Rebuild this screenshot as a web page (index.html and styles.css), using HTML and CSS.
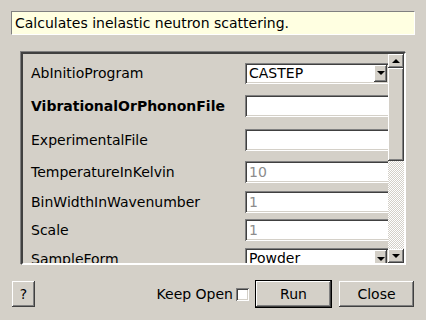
FILE: index.html
```html
<!DOCTYPE html>
<html lang="en">
<head>
    <meta charset="UTF-8">
    <meta name="viewport" content="width=device-width, initial-scale=1.0">
    <title>Abins</title>
    <link rel="stylesheet" href="styles.css">
</head>
<body>
    <div class="dialog">
        <div class="desc">Calculates inelastic neutron scattering.</div>

        <div class="panel">
            <div class="rows">
                <div class="row h32">
                    <span class="label">AbInitioProgram</span>
                    <div class="combo"><span class="value">CASTEP</span><span class="drop"><i class="tri-down"></i></span></div>
                </div>
                <div class="row h34">
                    <span class="label bold">VibrationalOrPhononFile</span>
                    <div class="field"></div>
                </div>
                <div class="row h34">
                    <span class="label">ExperimentalFile</span>
                    <div class="field"></div>
                </div>
                <div class="row h30">
                    <span class="label">TemperatureInKelvin</span>
                    <div class="field hint">10</div>
                </div>
                <div class="row">
                    <span class="label">BinWidthInWavenumber</span>
                    <div class="field hint">1</div>
                </div>
                <div class="row h28">
                    <span class="label">Scale</span>
                    <div class="field hint">1</div>
                </div>
                <div class="row">
                    <span class="label">SampleForm</span>
                    <div class="combo"><span class="value">Powder</span><span class="drop"><i class="tri-down"></i></span></div>
                </div>
            </div>
            <div class="scrollbar">
                <div class="sb-btn"><i class="tri-up"></i></div>
                <div class="thumb"></div>
                <div class="track"></div>
                <div class="sb-btn"><i class="tri-down"></i></div>
            </div>
        </div>

        <div class="actions">
            <button class="btn help">?</button>
            <span class="spacer"></span>
            <label class="keep">Keep Open <span class="check"></span></label>
            <button class="btn default">Run</button>
            <button class="btn close">Close</button>
        </div>
    </div>
</body>
</html>
```

FILE: styles.css
```css
body {
    margin: 0;
    padding: 0;
    background-color: #d4d0c8;
    font-family: "DejaVu Sans", sans-serif;
    font-size: 14px;
    color: #000;
}
.dialog {
    width: 426px;
    height: 320px;
    overflow: hidden;
}
.desc {
    margin: 11px 11px 0 11px;
    height: 22px;
    line-height: 22px;
    padding-left: 3px;
    background-color: #ffffe1;
    border: 1px solid #fff;
    border-top-color: #808080;
    border-left-color: #808080;
    white-space: nowrap;
}
.panel {
    display: flex;
    margin: 17px 0 0 21px;
    width: 381px;
    height: 209px;
    border: 2px solid;
    border-color: #404040 #fff #fff #404040;
    box-shadow: -1px -1px 0 #808080;
}
.rows {
    flex: 1;
    overflow: hidden;
    padding-top: 3px;
}
.row {
    display: flex;
    align-items: center;
    height: 29px;
    white-space: nowrap;
}
.h28 { height: 28px; }
.h30 { height: 30px; }
.h32 { height: 32px; }
.h34 { height: 34px; }
.label {
    width: 214px;
    flex-shrink: 0;
    padding-left: 8px;
}
.bold {
    font-weight: bold;
}
.field, .combo {
    flex-shrink: 0;
    height: 18px;
    line-height: 18px;
    padding: 2px 4px;
    background-color: #fff;
    box-shadow: inset 1px 1px #808080, inset -1px -1px #fff, inset 2px 2px #404040, inset -2px -2px #d4d0c8;
}
.field {
    width: 200px;
}
.hint {
    color: #8c8c8c;
}
.combo {
    display: flex;
    width: 138px;
    height: 17px;
    line-height: 17px;
    padding-right: 2px;
}
.combo .value {
    flex: 1;
}
.drop {
    display: flex;
    align-items: center;
    justify-content: center;
    width: 13px;
    height: 17px;
    background-color: #d4d0c8;
    box-shadow: inset -1px -1px #404040, inset 1px 1px #fff, inset -2px -2px #808080;
}
.tri-down, .tri-up {
    display: block;
    width: 0;
    height: 0;
    border-left: 4px solid transparent;
    border-right: 4px solid transparent;
}
.tri-down {
    border-top: 4px solid #000;
}
.tri-up {
    border-bottom: 4px solid #000;
}
.scrollbar {
    display: flex;
    flex-direction: column;
    width: 16px;
}
.sb-btn, .thumb, .btn {
    background-color: #d4d0c8;
    box-shadow: inset -1px -1px #404040, inset 1px 1px #fff, inset -2px -2px #808080;
}
.sb-btn {
    display: flex;
    align-items: center;
    justify-content: center;
    height: 14px;
}
.thumb {
    height: 93px;
}
.track {
    flex: 1;
    background: repeating-conic-gradient(#fff 0 25%, #d4d0c8 0 50%) 0 0 / 2px 2px;
}
.actions {
    display: flex;
    align-items: center;
    margin-top: 15px;
    padding: 0 12px;
    height: 28px;
}
.spacer {
    flex: 1;
}
.btn {
    height: 26px;
    padding: 0;
    border: none;
    font-family: inherit;
    font-size: 14px;
    color: #000;
}
.help {
    width: 23px;
}
.keep {
    display: flex;
    align-items: center;
    gap: 3px;
    margin-right: 6px;
}
.check {
    width: 13px;
    height: 13px;
    background-color: #fff;
    box-sizing: border-box;
    box-shadow: inset 1px 1px #808080, inset -1px -1px #fff, inset 2px 2px #404040, inset -2px -2px #d4d0c8;
}
.default {
    width: 77px;
    height: 28px;
    border: 1px solid #000;
    margin-right: 7px;
}
.close {
    width: 75px;
}
```
